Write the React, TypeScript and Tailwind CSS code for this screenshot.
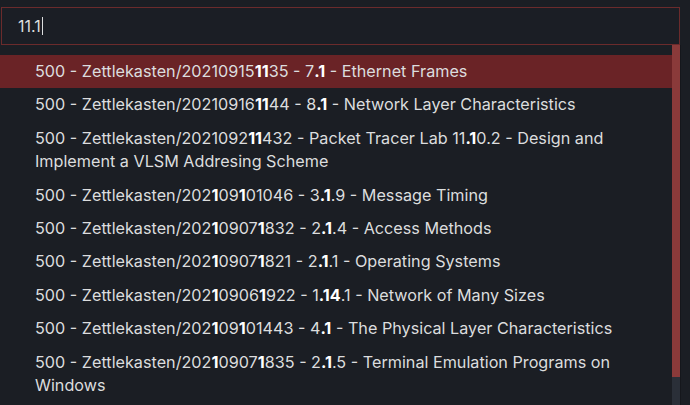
import React from 'react';

type Part = { t: string; b?: boolean };

const rows: Part[][] = [
  [{ t: '500 - Zettlekasten/20210915' }, { t: '11', b: true }, { t: '35 - 7' }, { t: '.1', b: true }, { t: ' - Ethernet Frames' }],
  [{ t: '500 - Zettlekasten/20210916' }, { t: '11', b: true }, { t: '44 - 8' }, { t: '.1', b: true }, { t: ' - Network Layer Characteristics' }],
  [
    { t: '500 - Zettlekasten/2021092' },
    { t: '11', b: true },
    { t: '432 - Packet Tracer Lab 11' },
    { t: '.1', b: true },
    { t: '0.2 - Design and Implement a VLSM Addresing Scheme' },
  ],
  [{ t: '500 - Zettlekasten/202' }, { t: '1', b: true }, { t: '09' }, { t: '1', b: true }, { t: '01046 - 3' }, { t: '.1', b: true }, { t: '.9 - Message Timing' }],
  [{ t: '500 - Zettlekasten/202' }, { t: '1', b: true }, { t: '0907' }, { t: '1', b: true }, { t: '832 - 2' }, { t: '.1', b: true }, { t: '.4 - Access Methods' }],
  [{ t: '500 - Zettlekasten/202' }, { t: '1', b: true }, { t: '0907' }, { t: '1', b: true }, { t: '821 - 2' }, { t: '.1', b: true }, { t: '.1 - Operating Systems' }],
  [{ t: '500 - Zettlekasten/202' }, { t: '1', b: true }, { t: '0906' }, { t: '1', b: true }, { t: '922 - 1' }, { t: '.1', b: true }, { t: '4', b: true }, { t: '.1 - Network of Many Sizes' }],
  [{ t: '500 - Zettlekasten/202' }, { t: '1', b: true }, { t: '09' }, { t: '1', b: true }, { t: '01443 - 4' }, { t: '.1', b: true }, { t: ' - The Physical Layer Characteristics' }],
  [
    { t: '500 - Zettlekasten/202' },
    { t: '1', b: true },
    { t: '0907' },
    { t: '1', b: true },
    { t: '835 - 2' },
    { t: '.1', b: true },
    { t: '.5 - Terminal Emulation Programs on Windows' },
  ],
];

export default function App() {
  return (
    <div className="flex h-[405px] w-[690px] flex-col overflow-hidden bg-[#1b1e24] pt-[7px] font-['Inter',sans-serif] text-[#dcddde]">
      <div className="ml-[1px] flex h-[38px] w-[679px] shrink-0 items-center border border-[#6b2b2c] bg-[#1b1e25] pl-[16px] text-[16px]">
        <span>11.1</span>
        <span className="ml-[1px] h-[18px] w-[1px] bg-[#dcddde]" />
      </div>
      <div className="flex min-h-0 flex-1">
        <div className="w-[672px] pt-[10px]">
          {rows.map((parts, i) => (
            <div
              key={i}
              className={
                i === 0
                  ? 'bg-[#6a2326] py-[5px] pl-[35px] pr-[50px] text-[16.2px] leading-[23.4px]'
                  : 'py-[5px] pl-[35px] pr-[50px] text-[16.2px] leading-[23.4px]'
              }
            >
              {parts.map((p, j) =>
                p.b ? (
                  <span key={j} className="font-bold text-white">
                    {p.t}
                  </span>
                ) : (
                  <span key={j}>{p.t}</span>
                )
              )}
            </div>
          ))}
        </div>
        <div className="flex w-[8px] flex-col bg-[#2a2f38]">
          <div className="h-[332px] bg-[#8a3a3a]" />
        </div>
        <div className="w-[10px] border-l border-[#15171c]" />
      </div>
    </div>
  );
}
